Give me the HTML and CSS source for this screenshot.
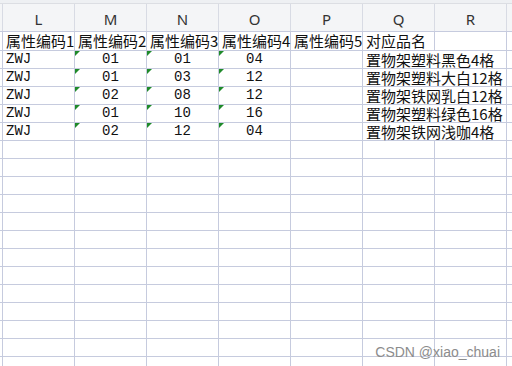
FILE: index.html
```html
<!DOCTYPE html>
<html lang="zh-CN">
<head>
  <meta charset="UTF-8">
  <title>属性编码</title>
  <link rel="stylesheet" href="styles.css">
</head>
<body>
  <div class="sheet">
    <div class="top-strip"></div>

    <div class="row col-head">
      <div class="rh"></div>
      <div class="cell">L</div>
      <div class="cell">M</div>
      <div class="cell">N</div>
      <div class="cell">O</div>
      <div class="cell">P</div>
      <div class="cell">Q</div>
      <div class="cell">R</div>
      <div class="cell"></div>
    </div>

    <div class="row first">
      <div class="rh"></div>
      <div class="cell">属性编码1</div>
      <div class="cell">属性编码2</div>
      <div class="cell">属性编码3</div>
      <div class="cell">属性编码4</div>
      <div class="cell">属性编码5</div>
      <div class="cell">对应品名</div>
      <div class="cell"></div>
      <div class="cell"></div>
    </div>

    <div class="row">
      <div class="rh"></div>
      <div class="cell mono">ZWJ</div>
      <div class="cell num flag">01</div>
      <div class="cell num flag">01</div>
      <div class="cell num flag">04</div>
      <div class="cell"></div>
      <div class="cell spill">置物架塑料黑色4格</div>
      <div class="cell"></div>
    </div>
    <div class="row">
      <div class="rh"></div>
      <div class="cell mono">ZWJ</div>
      <div class="cell num flag">01</div>
      <div class="cell num flag">03</div>
      <div class="cell num flag">12</div>
      <div class="cell"></div>
      <div class="cell spill">置物架塑料大白12格</div>
      <div class="cell"></div>
    </div>
    <div class="row">
      <div class="rh"></div>
      <div class="cell mono">ZWJ</div>
      <div class="cell num flag">02</div>
      <div class="cell num flag">08</div>
      <div class="cell num flag">12</div>
      <div class="cell"></div>
      <div class="cell spill">置物架铁网乳白12格</div>
      <div class="cell"></div>
    </div>
    <div class="row">
      <div class="rh"></div>
      <div class="cell mono">ZWJ</div>
      <div class="cell num flag">01</div>
      <div class="cell num flag">10</div>
      <div class="cell num flag">16</div>
      <div class="cell"></div>
      <div class="cell spill">置物架塑料绿色16格</div>
      <div class="cell"></div>
    </div>
    <div class="row">
      <div class="rh"></div>
      <div class="cell mono">ZWJ</div>
      <div class="cell num flag">02</div>
      <div class="cell num flag">12</div>
      <div class="cell num flag">04</div>
      <div class="cell"></div>
      <div class="cell spill">置物架铁网浅咖4格</div>
      <div class="cell"></div>
    </div>

    <div class="empty-rows"></div>
  </div>

  <div class="watermark">CSDN @xiao_chuai</div>
</body>
</html>
```

FILE: styles.css
```css
body {
  margin: 0;
  background-color: #ffffff;
  color: #111;
  font-family: "Noto Sans CJK SC", "Noto Sans", sans-serif;
  font-size: 15px;
  width: 512px;
  height: 366px;
  overflow: hidden;
}
.sheet {
  display: flex;
  flex-direction: column;
  height: 366px;
}
.top-strip {
  height: 3px;
  background-color: #eef0f3;
  flex-shrink: 0;
}
.row {
  display: grid;
  grid-template-columns: 3px repeat(7, 72px) 1fr;
  height: 18px;
  border-bottom: 1px solid #c6cbde;
  box-sizing: border-box;
  flex-shrink: 0;
}
.row.first {
  height: 19px;
}
.cell {
  position: relative;
  border-right: 1px solid #c6cbde;
  padding: 0 3px;
  line-height: 17px;
  white-space: nowrap;
}
.rh {
  border-right: 1px solid #c6cbde;
}
.col-head {
  height: 29px;
  background-color: #f4f5f7;
  border-top: 1px solid #dcdee3;
  font-family: "Noto Sans", sans-serif;
  color: #333;
}
.col-head .cell {
  border-right-color: #d8dbe4;
  text-align: center;
  line-height: 22px;
  padding-top: 4px;
}
.col-head .rh {
  border-right-color: #d8dbe4;
}
.mono {
  font-family: "Liberation Mono", monospace;
  font-size: 14px;
}
.num {
  text-align: center;
  font-family: "Liberation Mono", monospace;
  font-size: 14px;
}
.spill {
  grid-column: span 2;
}
.flag::before {
  content: "";
  position: absolute;
  left: 0;
  top: 0;
  border-top: 5px solid #1f8a2a;
  border-right: 5px solid transparent;
}
.empty-rows {
  flex: 1;
  background-image:
    linear-gradient(#c6cbde, #c6cbde),
    linear-gradient(to left, #c6cbde 1px, transparent 1px),
    linear-gradient(to top, #c6cbde 1px, transparent 1px);
  background-size: 1px 100%, 72px 100%, 100% 18px;
  background-position: 2px 0, 3px 0, 0 0;
  background-repeat: no-repeat, repeat-x, repeat-y;
}
.watermark {
  position: absolute;
  right: 12px;
  bottom: 6px;
  font-family: "Liberation Sans", Arial, sans-serif;
  font-size: 14px;
  color: #8c8c8c;
}
```
